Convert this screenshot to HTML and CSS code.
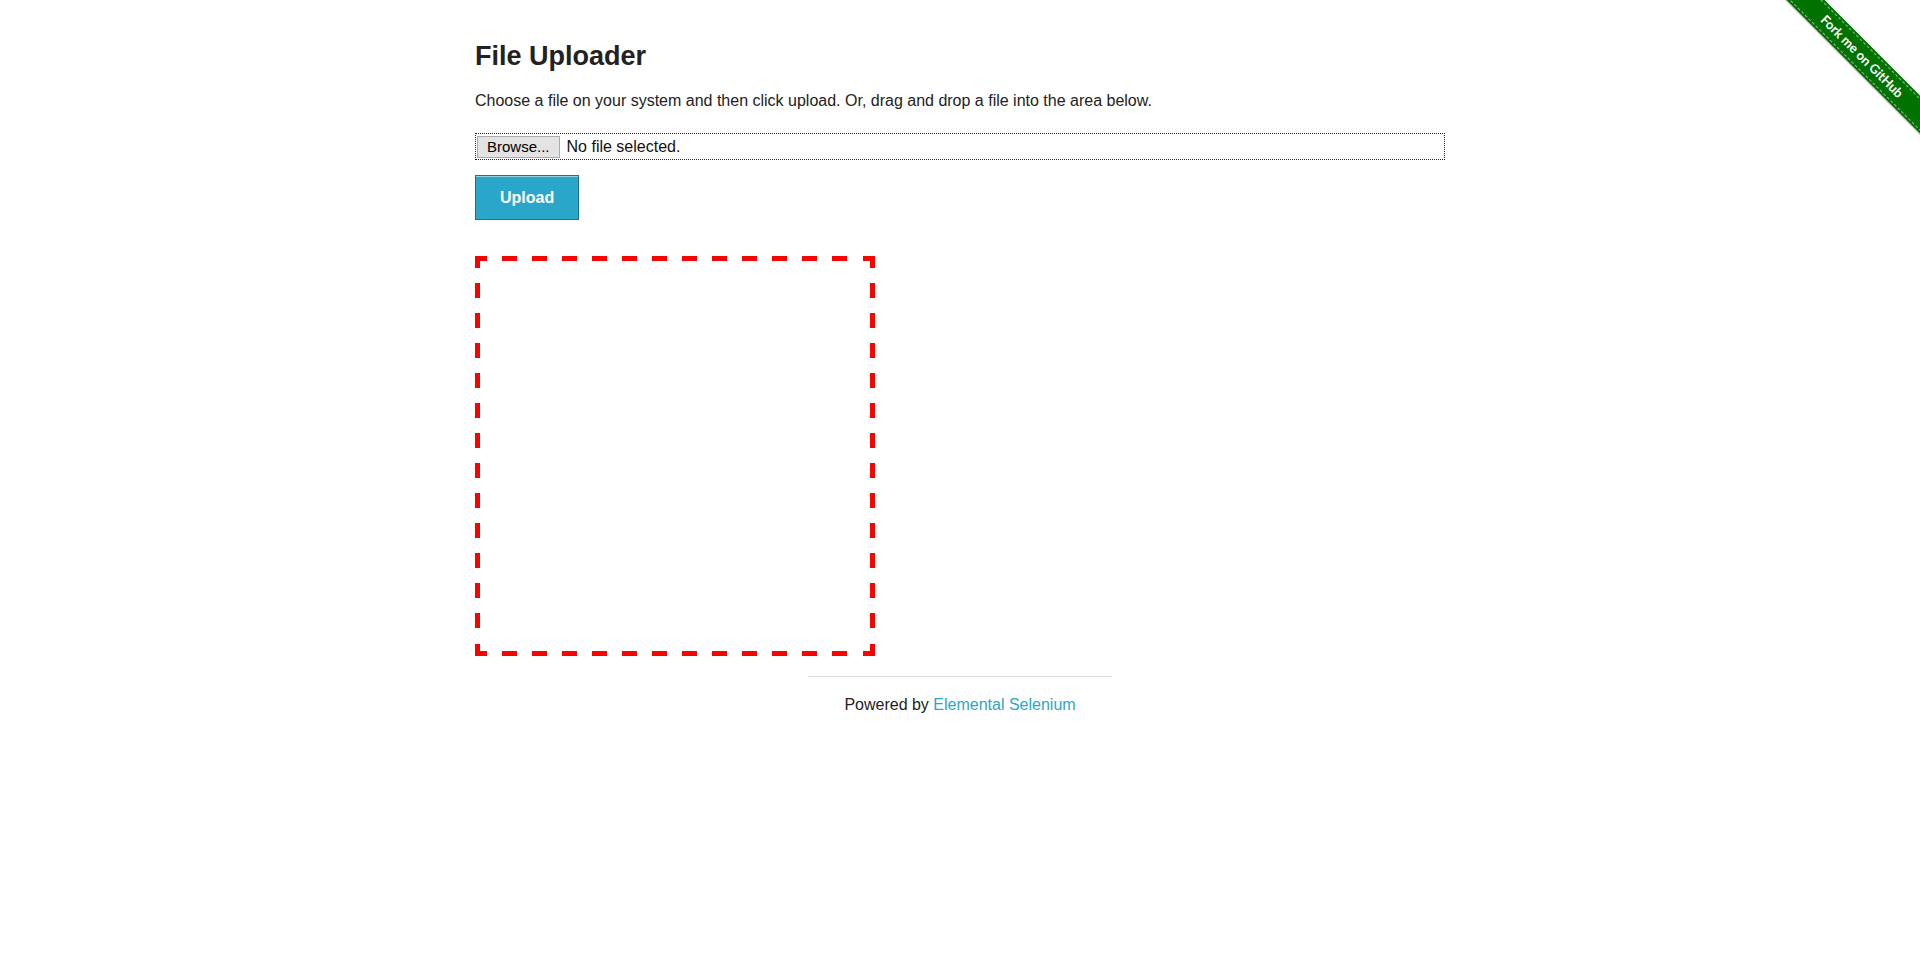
FILE: index.html
```html
<!DOCTYPE html>
<html lang="en">
<head>
<meta charset="utf-8">
<title>The Internet</title>
<link rel="stylesheet" href="styles.css">
</head>
<body>
<div class="ribbon">
  <a class="ribbon-band" href="#">Fork me on GitHub</a>
</div>
<div class="page">
  <div class="example">
    <h3 class="title">File Uploader</h3>
    <p class="intro">Choose a file on your system and then click upload. Or, drag and drop a file into the area below.</p>
    <form class="upload-form">
      <div class="file-box">
        <button type="button" class="browse">Browse...</button>
        <span class="file-label">No file selected.</span>
      </div>
      <button type="button" class="upload-btn">Upload</button>
    </form>
    <div class="dropzone"></div>
  </div>
  <div class="footer">
    <hr class="footer-rule">
    <div class="footer-text">Powered by <a href="#" class="footer-link">Elemental Selenium</a></div>
  </div>
</div>
</body>
</html>
```
FILE: styles.css
```css
* { box-sizing: border-box; }
html, body { margin: 0; padding: 0; background: #fff; }
body {
  font-family: "Liberation Sans", Arial, Helvetica, sans-serif;
  color: #222;
  font-size: 16px;
}
.page {
  width: 970px;
  margin: 0 auto;
}
.example {
  padding-top: 40px;
}
.title {
  font-size: 27px;
  line-height: 33px;
  font-weight: bold;
  margin: 0 0 15px;
  color: #222;
}
.intro {
  margin: 0 0 19px;
  line-height: 26px;
  font-size: 16px;
}
.upload-form { margin: 0; }
.file-box {
  width: 970px;
  height: 27px;
  border: 1px dotted #222;
  display: flex;
  align-items: center;
  padding: 0 1px;
}
.browse {
  height: 22px;
  padding: 0 9px;
  margin: 0;
  font-family: "Liberation Sans", Arial, sans-serif;
  font-size: 15px;
  line-height: 20px;
  color: #000;
  background: #e3e3e3;
  border: 1px solid #aaa;
  border-radius: 0;
}
.file-label {
  margin-left: 7px;
  font-size: 16px;
  color: #111;
}
.upload-btn {
  display: block;
  margin-top: 15px;
  padding: 13px 24px 13px;
  font-family: "Liberation Sans", Arial, sans-serif;
  font-size: 16px;
  line-height: 17px;
  font-weight: bold;
  color: #fff;
  background: #2ba6cb;
  border: 1px solid #1e728c;
  box-shadow: inset 0 1px 0 rgba(255,255,255,0.5);
  border-radius: 0;
}
.dropzone {
  margin-top: 36px;
  width: 400px;
  height: 400px;
  background:
    linear-gradient(#f00, #f00) left top / 12px 5px no-repeat,
    linear-gradient(#f00, #f00) left top / 5px 12px no-repeat,
    linear-gradient(#f00, #f00) right top / 12px 5px no-repeat,
    linear-gradient(#f00, #f00) right top / 5px 12px no-repeat,
    linear-gradient(#f00, #f00) left bottom / 12px 5px no-repeat,
    linear-gradient(#f00, #f00) left bottom / 5px 12px no-repeat,
    linear-gradient(#f00, #f00) right bottom / 12px 5px no-repeat,
    linear-gradient(#f00, #f00) right bottom / 5px 12px no-repeat,
    repeating-linear-gradient(to right, #f00 0 15px, transparent 15px 30px) 27px 0 / 345px 5px no-repeat,
    repeating-linear-gradient(to right, #f00 0 15px, transparent 15px 30px) 27px 395px / 345px 5px no-repeat,
    repeating-linear-gradient(to bottom, #f00 0 15px, transparent 15px 30px) 0 27px / 5px 345px no-repeat,
    repeating-linear-gradient(to bottom, #f00 0 15px, transparent 15px 30px) 395px 27px / 5px 345px no-repeat,
    #fff;
}
.footer {
  width: 304px;
  margin: 20px auto 0;
}
.footer-rule {
  margin: 0;
  height: 0;
  border: 0;
  border-top: 1px solid #ddd;
}
.footer-text {
  margin-top: 17px;
  text-align: center;
  line-height: 22px;
  color: #222;
}
.footer-link {
  color: #2ba6cb;
  text-decoration: none;
}
.ribbon {
  position: absolute;
  top: 0;
  right: 0;
  width: 149px;
  height: 149px;
  overflow: hidden;
}
.ribbon-band {
  position: absolute;
  left: -29px;
  top: 43px;
  width: 240px;
  height: 27px;
  background: #007200;
  color: #fff;
  text-decoration: none;
  font-family: Lato, "Open Sans", sans-serif;
  font-weight: bold;
  font-size: 13px;
  line-height: 27px;
  text-align: center;
  transform: rotate(45deg);
  box-shadow: 0 1px 1px rgba(0,0,0,0.25);
}
.ribbon-band::before {
  content: "";
  position: absolute;
  left: 0;
  right: 0;
  top: 2px;
  bottom: 2px;
  border-top: 1px dashed rgba(255,255,255,0.55);
  border-bottom: 1px dashed rgba(255,255,255,0.55);
}
```
